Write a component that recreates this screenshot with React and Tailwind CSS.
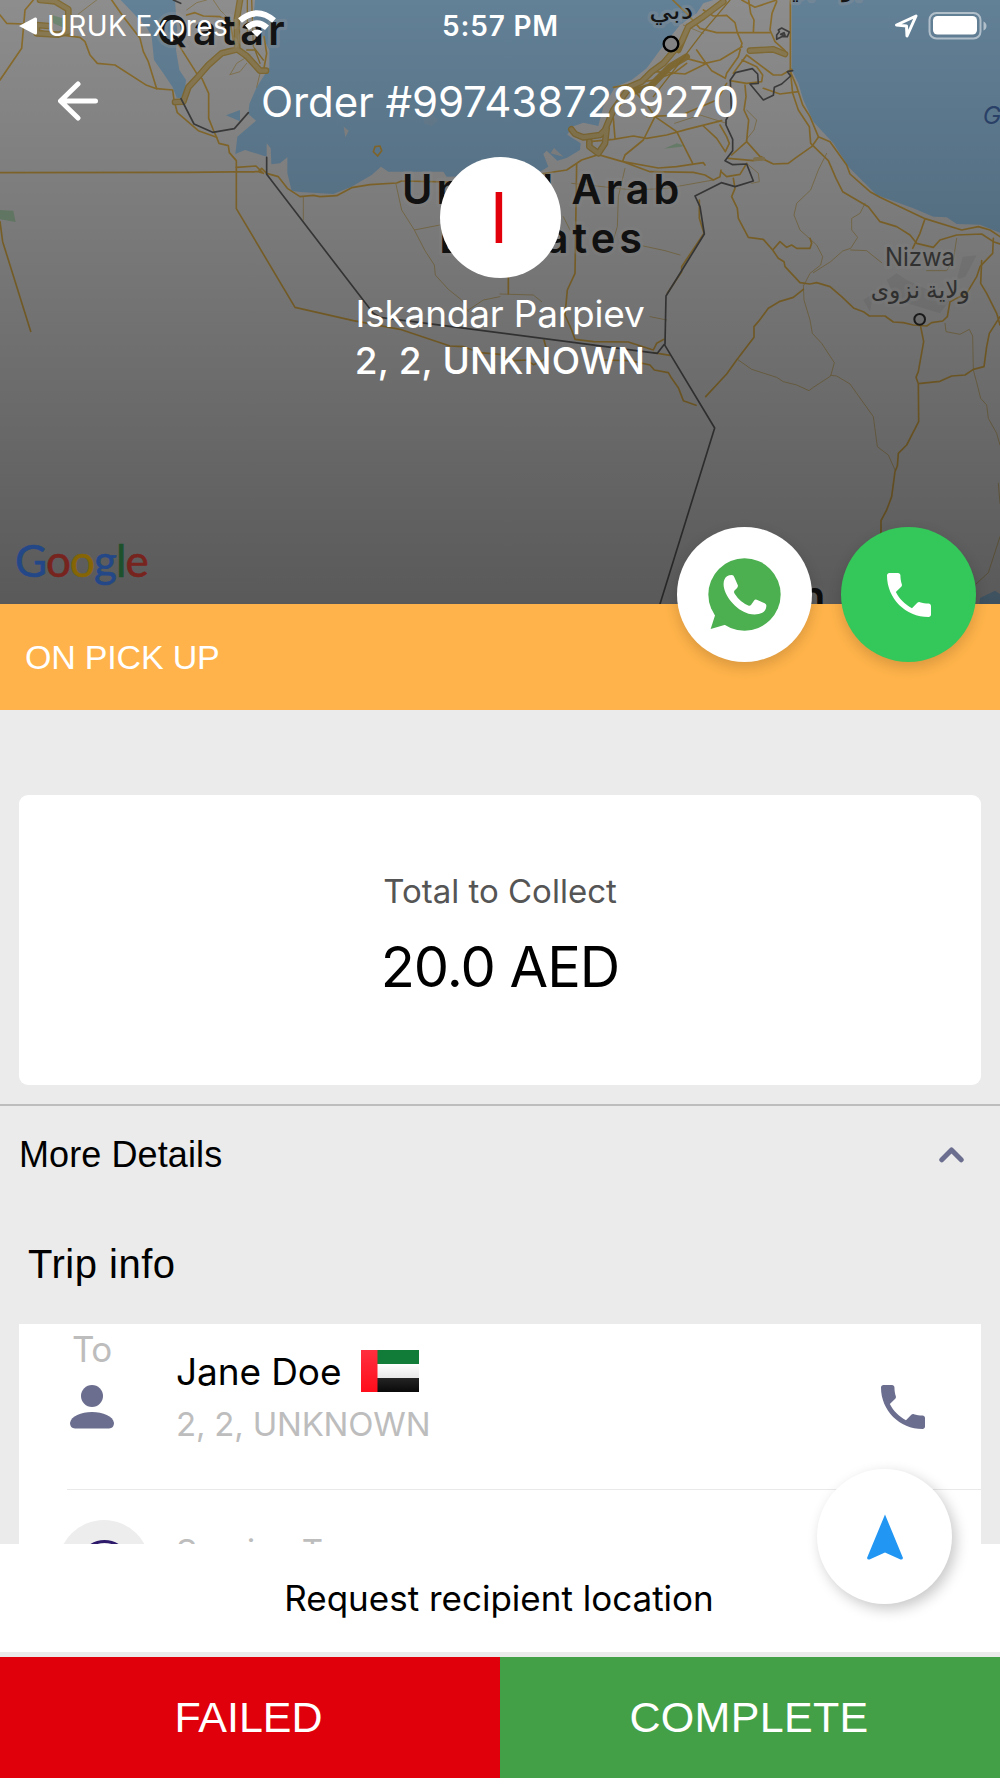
import React from "react";

const PHONE_PATH =
  "M6.62 10.79c1.44 2.83 3.76 5.14 6.59 6.59l2.2-2.2c.27-.27.67-.36 1.02-.24 1.12.37 2.33.57 3.57.57.55 0 1 .45 1 1V20c0 .55-.45 1-1 1-9.39 0-17-7.61-17-17 0-.55.45-1 1-1h3.5c.55 0 1 .45 1 1 0 1.25.2 2.45.57 3.57.11.35.03.74-.25 1.02l-2.2 2.2z";

const PhoneIcon = ({ className }) => (
  <svg viewBox="3 3 18 18" fill="currentColor" className={className}>
    <path d={PHONE_PATH} />
  </svg>
);

// map is drawn at 3 units per pixel
const MapView = () => (
  <svg
    viewBox="0 0 3000 1812"
    className="absolute inset-0 w-full h-full"
    fill="none"
    strokeLinejoin="round"
    strokeLinecap="round"
  >
    <rect width="3000" height="1812" fill="#ebebeb" />
    <g fill="#a3d5fa">
      <path d="M362 0L400 40L440 82L455 110L462 180L490 220L518 262L530 293L552 296L558 240L538 210L528 150L532 100L525 0Z" />
      <path d="M765 0L760 60L790 115L808 150L808 202L770 262L748 312L745 342L768 362L712 410L706 462L735 450L800 470L800 430L812 445L814 493L840 490L862 472L862 520L875 572L900 576L1000 582L1055 560L1115 525L1143 500L1165 515L1330 515L1340 530L1440 528L1620 515L1645 500L1630 462L1640 452L1672 482L1700 474L1740 450L1742 430L1702 404L1716 380L1750 368L1795 378L1810 320L1845 262L1895 240L1940 205L1980 150L2020 100L2040 75L2090 40L2110 10L2140 0Z" />
      <path d="M678 346L720 330L720 364Z" />
      <path d="M2375 0L2375 210L2395 250L2410 300L2440 365L2500 430L2545 500L2630 585L2740 625L2800 650L2840 652L2870 672L2940 674L3000 698L3000 0Z" />
      <path d="M2938 1812L2940 1794L2985 1772L3000 1782L3000 1812Z" />
    </g>
    <g fill="#e2e2e2">
      <path d="M1031 380L1046 392L1036 412Z" />
      <path d="M1652 460L1662 444L1690 470Z" />
      <path d="M1270 355L1300 345L1315 360L1295 378L1272 370Z" opacity=".2" />
    </g>
    <g fill="#b9e0bd">
      <path d="M0 630L40 632L47 666L0 658Z" />
      <path d="M155 45L188 55L188 82L160 70Z" />
      <path d="M1992 446L2030 430L2050 436L2045 440Z" />
    </g>
    <g fill="#dedede">
      <path d="M2888 770L2930 766L2896 830L2870 840Z" />
      <path d="M2660 840L2690 820L2720 840L2850 900L2820 940L2690 900Z" />
      <path d="M2590 900L2620 880L2610 935Z" />
    </g>

    {/* minor roads */}
    <g stroke="#dcc488" strokeWidth="3">
      <path d="M235 42L290 0M560 30L590 8L620 0M640 0L660 30L680 50M690 224L710 190L750 165M690 224L720 215L740 190M780 220L770 262" />
      <path d="M910 590V660M1188 553L1205 630L1243 690L1275 752L1303 795L1306 825L1345 868L1385 900L1405 935M1243 690L1320 675M1405 930L1450 900L1500 890" />
      <path d="M1875 505L1855 590L1852 680L1840 720M1930 738L1995 752L2040 765M1715 550L1900 570L2000 565L2140 540M1690 650L1710 690" />
      <path d="M2480 460L2455 510L2432 570L2390 610L2382 645L2400 690L2450 735L2468 770L2462 795L2430 820L2412 855" />
      <path d="M2595 610L2580 640L2555 655L2555 690L2573 712L2552 745L2528 753L2492 785L2440 818M2552 750L2600 752L2622 770L2645 788M2870 715L2860 780L2840 812L2780 812" />
      <path d="M2240 330L2270 360L2262 390L2238 420M2024 370L2100 345L2180 370M2050 75L2110 100M2240 490L2275 520L2278 545L2255 550" />
      <path d="M2410 855L2412 900L2430 960L2437 1000L2465 1030L2503 1088L2492 1128L2440 1162L2427 1172L2390 1155L2350 1145L2330 1132L2255 1108L2215 1080" />
      <path d="M2492 1126L2510 1128L2550 1152L2620 1250L2632 1340L2665 1365L2685 1410" />
      <path d="M2835 970L2838 995L2880 1003L2908 988L2918 1008L2920 1110L2932 1155L2942 1195L2960 1215L2965 1255L2990 1300L3000 1335M3000 1610L2965 1718L2928 1752M2995 1450L3000 1510" />
      <path d="M1500 882L1600 885L1625 905M1950 950L2000 960" />
    </g>

    {/* main roads */}
    <g stroke="#e6b64c" strokeWidth="5">
      <path d="M0 240L65 145L75 30L100 0M0 45L20 70L70 72L145 100L240 112L255 125L270 165L292 190L345 195L440 256L470 266L518 270L522 300L532 338L595 392L650 412L657 430L685 437L688 458L709 482L709 626L885 922L1060 962L1200 988L1350 1038L1390 1040L1440 1058L1500 1063L1540 1082L1580 1080L1600 1094L1632 1080L1640 1050L1632 1020" />
      <path d="M335 0L370 50L420 115L430 155L445 185L470 266M530 125L590 220L606 236L626 280L626 355L640 390L650 412M0 518L560 517L775 515L785 505L800 520L835 530L862 565L900 590L940 586L960 590L1010 587L1055 563L1110 554L1190 549L1205 543L1400 547M709 502L768 498L790 520L775 515" />
      <path d="M0 665L8 725L92 994M790 215L800 160L792 110M1125 440L1140 438L1145 452L1133 468L1120 455L1125 440" />
      <path d="M560 45L585 38L610 48L660 50L690 62L700 120" />
      <path d="M1620 522L1700 510L1745 480L1795 464L1865 484L1950 515L2080 517L2115 525L2140 540L2160 530L2163 510M1865 484L1975 504L2030 500L2110 488L2115 495M1730 490L1725 820L1702 870L1695 945L1715 990L1725 1018L1780 1025L1885 1026L1960 1050L1970 1030L1992 1018" />
      <path d="M1525 830V882M1800 1080L1890 1082L1950 1095L1963 1110L2005 1118L2015 1135L2035 1163L2050 1202L2088 1216M1960 1058L2010 1066" />
      <path d="M1768 425L1840 418L1900 408L1940 415L2000 405L2060 388L2165 362M1840 355L1845 415M1940 350L2045 345L2150 300L2180 250M1965 350L2030 395L2078 490M1965 350L1930 420L1875 465L1868 484M1840 262L1960 240L2020 220L2060 190M1965 350L1938 310L1900 270" />
      <path d="M2018 0L2060 40M2060 40L2100 85L2150 98L2310 98M2110 30L2140 48L2180 46L2205 68L2212 98L2226 130L2215 170L2180 220L2176 235L2135 212L2118 190L2090 150M2246 0L2252 40L2262 60L2260 98M2225 0L2265 22L2300 10L2330 0M2330 5L2316 40L2310 90L2325 125L2355 152M2116 192L2055 222L1965 215M2058 175L2115 190L2160 180L2226 140M2200 220L2240 165L2300 210L2320 225L2345 225L2375 208M2226 180L2270 200L2288 225L2285 245L2240 250L2190 242" />
      <path d="M2290 265L2340 282L2395 275M2235 255L2238 290L2232 330L2246 360L2242 400L2240 425L2195 465M2240 425L2285 475L2320 492L2365 490L2385 475L2435 440L2455 412M2185 475L2260 482L2285 470M2160 375L2180 410L2188 430L2176 455L2150 415L2110 378" />
      <path d="M2371 0L2371 210L2378 280L2395 330L2428 380L2432 430L2485 482L2508 535L2528 575L2605 620L2640 665L2690 680L2730 705L2750 730L2800 742L2820 720L2870 705L2945 702L2980 725L3000 732" />
      <path d="M2371 215L2390 260L2408 315L2430 350L2455 410L2490 425L2540 495L2550 522L2610 575L2640 592L2775 656L2885 690L2935 680L2970 690L3000 710M2775 656L2760 700L2738 745M2980 715L2978 760L2940 800L2930 830L2900 880L2850 905L2842 950L2828 963L2795 968L2780 978L2740 975L2710 968L2680 966L2655 948L2608 948L2590 935L2562 925L2525 890L2490 860L2450 848L2430 852L2400 848L2355 800L2352 785L2335 775L2318 750L2290 718L2245 712L2215 655L2212 625L2195 590L2205 565L2200 535M2240 490L2220 523L2180 530L2163 515M2318 750L2340 725L2360 742L2375 735L2390 745L2430 745L2435 730L2430 715" />
      <path d="M2945 782L2942 850L2960 880L2990 940L3000 975M3000 950L2968 1000L2960 1040L2952 1100L2920 1108L2895 1125L2855 1128L2820 1144L2755 1151M2762 980L2771 1025L2755 1115L2748 1132L2755 1151L2756 1265L2720 1335L2695 1360L2692 1398L2685 1415L2675 1490L2660 1530L2643 1562V1700" />
      <path d="M2410 868L2380 892L2340 904L2305 925L2275 965L2262 980V1012L2210 1080L2180 1122L2117 1190M2098 600L2098 655L2112 700L2045 800L2045 815L2002 880" />
    </g>

    {/* motorways */}
    <g stroke="#d9b458" strokeWidth="20">
      <path d="M720 0L710 60L712 148L665 160L625 195L590 235L565 262L550 305L525 306M712 148L740 168L780 212L798 212M120 0L165 4L205 28V95L175 104L110 100V75L145 78" />
      <path d="M2170 5L2110 50L2065 80L2045 125L1990 190L1955 215L1925 245L1890 260L1840 330L1815 390L1800 405L1750 412L1725 402L1714 388M1820 385L1815 430L1795 460L1768 440V425M2065 80L2035 150M2060 170L2010 200L1950 260L1900 275" />
      <path d="M2250 152L2320 148L2355 162" />
    </g>
    <g stroke="#e6cc8a" strokeWidth="12">
      <path d="M720 0L710 60L712 148L665 160L625 195L590 235L565 262L550 305L525 306M712 148L740 168L780 212L798 212M120 0L165 4L205 28V95L175 104L110 100V75L145 78" />
      <path d="M2170 5L2110 50L2065 80L2045 125L1990 190L1955 215L1925 245L1890 260L1840 330L1815 390L1800 405L1750 412L1725 402L1714 388M1820 385L1815 430L1795 460L1768 440V425" />
      <path d="M2250 152L2320 148L2355 162M2265 478L2290 476" />
    </g>
    <path d="M742 0V110M755 0L760 140L790 180M740 150L765 150L780 190M2190 0L2110 95L2030 200L1960 290" stroke="#d9ae48" strokeWidth="4" />

    {/* borders */}
    <g stroke="#666" strokeWidth="5">
      <path d="M543 296L582 372L638 397L703 386L745 338M520 0L542 10M800 472V523L1120 940L1140 952L1972 1060L1993 1033L2144 1284L1980 1812M1995 1033L1998 888L2113 702L2100 620L2085 588L2164 548L2205 560L2260 543L2240 492L2198 494L2175 482L2198 452V418L2178 375L2178 360L2194 332L2191 240L2206 218L2257 206L2273 222L2275 250L2250 252L2290 300L2320 286L2323 262L2345 252L2372 228L2362 215L2378 212" />
      <path d="M2335 90L2345 84L2368 96L2362 110L2345 110L2330 118L2330 105L2338 95ZM2342 103L2352 98L2355 106Z" />
    </g>

    {/* place names */}
    <g
      fill="#202020"
      fontFamily="Inter, sans-serif"
      fontWeight="600"
      fontSize="124"
      stroke="#fff"
      strokeOpacity=".28"
      strokeWidth="20"
      paintOrder="stroke"
    >
      <text x="470" y="136" textLength="384">Qatar</text>
      <text x="1206" y="611" textLength="832">United Arab</text>
      <text x="1318" y="760" textLength="608">Emirates</text>
      <text x="2476" y="1834" textAnchor="end">Oman</text>
      <g fontWeight="500" fontFamily="'Noto Sans', 'DejaVu Sans', sans-serif" fill="#222">
        <text x="1948" y="58" fontSize="76" textLength="132" lengthAdjust="spacingAndGlyphs">دبي</text>
        <text x="2360" y="-12" fontSize="76">أبو ظبي</text>
      </g>
      <g fontWeight="400" fill="#606060">
        <text x="2655" y="799" fontSize="77" textLength="210" lengthAdjust="spacingAndGlyphs">Nizwa</text>
        <text
          x="2612"
          y="894"
          fontSize="72"
          textLength="298"
          lengthAdjust="spacingAndGlyphs"
          fontFamily="'Noto Sans', 'DejaVu Sans', sans-serif"
        >
          ولاية نزوى
        </text>
      </g>
    </g>
    <text x="2948" y="373" fill="#4a73b8" fontFamily="Inter, sans-serif" fontStyle="italic" fontSize="74">G</text>
    <circle cx="2013" cy="132" r="22" fill="#dedede" stroke="#000" strokeWidth="7" />
    <circle cx="2759" cy="958" r="16" fill="#dedede" stroke="#333" strokeWidth="6" />
  </svg>
);

const StatusBar = () => (
  <div className="flex items-center h-[51px] pl-[19px] pr-[12px] text-white text-[28px] leading-none">
    <div className="flex items-center flex-1">
      <svg viewBox="0 0 18 18" className="w-[18px] h-[18px]" fill="currentColor">
        <path d="M0 9L16 .5Q18 0 18 2V16Q18 18 16 17.5Z" />
      </svg>
      <span className="ml-[10px] tracking-[0.4px]">URUK Expres</span>
      <svg viewBox="0 0 38 27" className="w-[38px] h-[27px] ml-[10px] -mt-[4px]" fill="none" stroke="currentColor" strokeWidth="6">
        <path d="M2 10.500Q19-4 36 10.500" />
        <path d="M9 17.800Q19 9 29 17.800" />
        <path d="M19 27L13.500 21.500Q19 17.500 24.500 21.500Z" fill="currentColor" stroke="none" />
      </svg>
    </div>
    <span className="-ml-[6px] font-semibold tracking-[0.8px]">5:57 PM</span>
    <div className="flex items-center justify-end flex-1 gap-[10px]">
      <svg viewBox="0 0 24 24" className="w-[24px] h-[24px]" fill="none" stroke="currentColor" strokeWidth="3" strokeLinejoin="round">
        <path d="M2.500 11L22 2L13 22L12.500 12Z" />
      </svg>
      <svg viewBox="0 0 60 28" className="w-[60px] h-[28px]">
        <rect x="1.500" y="1" width="51" height="25.500" rx="7" fill="none" stroke="#fff" strokeOpacity=".5" strokeWidth="2" />
        <rect x="5" y="4" width="44" height="18.500" rx="4.500" fill="#fff" />
        <path d="M55.500 9.500Q58.500 11 58.500 14T55.500 18.500Z" fill="#fff" fillOpacity=".5" />
      </svg>
    </div>
  </div>
);

const GoogleMark = () => (
  <div className="absolute left-[15px] bottom-[19px] font-[Lato] text-[44px] leading-[50px] tracking-[-0.9px] [-webkit-text-stroke:0.6px]">
    <span className="text-[#244887]">G</span>
    <span className="text-[#77231e]">o</span>
    <span className="text-[#866505]">o</span>
    <span className="text-[#244887]">g</span>
    <span className="text-[#1d512b]">l</span>
    <span className="text-[#77231e]">e</span>
  </div>
);

const Header = () => (
  <header className="relative h-[604px] overflow-hidden">
    <MapView />
    <div className="absolute inset-0 bg-linear-to-b from-black/40 to-black/62" />
    <div className="relative text-white text-center">
      <StatusBar />
      <div className="grid grid-cols-[156px_1fr_156px] items-center h-[101px]">
        <svg
          viewBox="0 0 40 40"
          className="w-[40px] h-[40px] ml-[58px] -mt-px"
          fill="none"
          stroke="currentColor"
          strokeWidth="5"
          strokeLinecap="round"
          strokeLinejoin="round"
        >
          <path d="M20 3L2.500 20L20 37M3 20H37.500" />
        </svg>
        <h1 className="text-[42px] leading-none tracking-[-0.1px]">Order #9974387289270</h1>
      </div>
      <div className="flex items-center justify-center w-[121px] h-[121px] mx-auto mt-[5px] bg-white rounded-full text-[#e2000b] text-[70px] leading-none">
        <span className="-ml-[2px]">I</span>
      </div>
      <p className="mt-[12px] text-[37px] leading-[47px] tracking-[-0.2px]">Iskandar Parpiev</p>
      <p className="text-[37px] leading-[47px] font-medium tracking-[0.1px]">2, 2, UNKNOWN</p>
    </div>
    <GoogleMark />
  </header>
);

const WhatsappIcon = () => (
  <svg viewBox="623 773 218 220" className="w-[73px] h-[73px]">
    <circle cx="732" cy="883" r="109" fill="#4caf50" />
    <path d="M630 987L645 940L690 970L674 974Z" fill="#4caf50" />
    <path
      d="M671 839Q676 824 694 824Q699 824 701 830L712 855Q713 859 709 864L702 871Q699 875 702 880Q718 906 745 917Q749 918 752 914L761 901Q764 897 769 899L794 910Q798 912 798 917Q797 932 786 938Q768 947 744 941C706 930 668 885 669 851Q669 844 671 839Z"
      fill="#fff"
    />
  </svg>
);

const RoundButton = ({ className, children }) => (
  <button
    className={`flex items-center justify-center w-[135px] h-[135px] rounded-full ${className}`}
  >
    {children}
  </button>
);

const OrderStatus = () => (
  <div className="relative flex items-center h-[106px] px-[25px] bg-[#ffb34a] text-white font-['Liberation_Sans'] text-[34px] tracking-[-0.2px]">
    ON PICK UP
    <div className="absolute right-[24px] -top-[77px] flex gap-[29px]">
      <RoundButton className="bg-white shadow-[0_5px_14px_rgba(0,0,0,0.16)]">
        <WhatsappIcon />
      </RoundButton>
      <RoundButton className="bg-[#34c759] text-white shadow-[0_5px_14px_rgba(0,0,0,0.16)]">
        <PhoneIcon className="w-[44px] h-[44px]" />
      </RoundButton>
    </div>
  </div>
);

const UaeFlag = () => (
  <svg viewBox="0 0 58 42" className="w-[58px] h-[42px]">
    <defs>
      <linearGradient id="flagRed" x1="0" y1="0" x2="0" y2="1">
        <stop offset="0" stopColor="#ff2f3f" />
        <stop offset="1" stopColor="#ff0d1b" />
      </linearGradient>
      <linearGradient id="flagWhite" x1="0" y1="0" x2="0" y2="1">
        <stop offset="0" stopColor="#fff" />
        <stop offset="1" stopColor="#e8e8e8" />
      </linearGradient>
      <linearGradient id="flagBlack" x1="0" y1="0" x2="0" y2="1">
        <stop offset="0" stopColor="#242424" />
        <stop offset="1" stopColor="#0a0a0a" />
      </linearGradient>
    </defs>
    <rect width="58" height="14" fill="#117c37" />
    <rect y="14" width="58" height="14" fill="url(#flagWhite)" />
    <rect y="28" width="58" height="14" fill="url(#flagBlack)" />
    <rect width="16.500" height="42" fill="url(#flagRed)" />
  </svg>
);

const TripInfo = () => (
  <section>
    <h2 className="pl-[28px] font-['Liberation_Sans'] text-[40px] leading-[120px] tracking-[0.5px]">
      Trip info
    </h2>
    <div className="mx-[19px] h-[220px] overflow-hidden bg-white">
      <div className="flex h-[165px]">
        <div className="w-[157px] pl-[51px] pt-[5px]">
          <p className="pl-[2px] text-[35px] leading-[40px] tracking-[-0.5px] text-[#bdbdbd]">To</p>
          <svg viewBox="0 0 44 44" className="w-[44px] h-[44px] mt-[16px]" fill="#6b6e8e">
            <circle cx="22" cy="11" r="11" />
            <path d="M5 43.500Q0 43 0 38C1 31 11 27 22 27S43 31 44 38Q44 43 39 43.500Z" />
          </svg>
        </div>
        <div className="flex-1 pt-[21px]">
          <div className="flex items-center gap-[20px] h-[52px]">
            <span className="text-[37px] leading-none tracking-[-0.1px]">Jane Doe</span>
            <UaeFlag />
          </div>
          <p className="mt-[7px] text-[33px] leading-[40px] tracking-[-0.2px] text-[#bdbdbd]">2, 2, UNKNOWN</p>
        </div>
        <PhoneIcon className="w-[44px] h-[44px] mr-[56px] mt-[61px] text-[#6b6e8e]" />
      </div>
      <div className="ml-[48px] h-px bg-[#e9e9e9]" />
      <div className="flex pt-[30px] pl-[39px]">
        <div className="flex items-center justify-center w-[92px] h-[92px] rounded-full bg-[#ededed]">
          <div className="w-[53px] h-[53px] rounded-full border-[3px] border-[#2e1a6b]" />
        </div>
        <p className="ml-[26px] mt-[11px] text-[33px] leading-[40px] tracking-[-0.2px] text-[#bdbdbd]">Service Type</p>
      </div>
    </div>
  </section>
);

export default function App() {
  return (
    <div className="w-[1000px] h-[1778px] overflow-hidden bg-[#ebebeb] font-[Inter,sans-serif] text-black">
      <Header />
      <OrderStatus />

      <section className="flex flex-col items-center mt-[85px] mx-[19px] h-[290px] pt-[76px] bg-white rounded-[9px]">
        <p className="text-[33px] leading-[40px] text-[#555]">Total to Collect</p>
        <p className="mt-[21px] text-[56px] leading-[70px] tracking-[-1px]">20.0 AED</p>
      </section>

      <div className="flex items-center justify-between mt-[19px] h-[100px] pl-[19px] pr-[36px] border-t-2 border-[#bdbdbd]">
        <span className="font-['Liberation_Sans'] text-[36px] tracking-[0.1px]">More Details</span>
        <svg
          viewBox="0 0 25 16"
          className="w-[25px] h-[16px]"
          fill="none"
          stroke="#6b6e8e"
          strokeWidth="5"
          strokeLinecap="round"
          strokeLinejoin="round"
        >
          <path d="M2.800 12.800L12.500 3L22.200 12.800" />
        </svg>
      </div>

      <TripInfo />

      <div className="relative flex items-center justify-center h-[108px] pr-[2px] bg-white text-[35px]">
        Request recipient location
        <RoundButton className="absolute right-[48px] -top-[75px] bg-white shadow-[4px_5px_14px_rgba(0,0,0,0.22)]">
          <svg viewBox="0 0 36 46" className="w-[36px] h-[46px]" fill="#2196f3">
            <path d="M18 .5L36 44Q35.500 46 33.500 45.500L18 38.500L2.500 45.500Q.5 46 0 44Z" />
          </svg>
        </RoundButton>
      </div>
      <div className="grid grid-cols-2 mt-[5px] h-[121px] font-['Liberation_Sans'] text-[43px] text-white">
        <button className="pr-[3px] bg-[#e0000b]">FAILED</button>
        <button className="pr-[2px] bg-[#43a047] tracking-[0.3px]">COMPLETE</button>
      </div>
    </div>
  );
}
